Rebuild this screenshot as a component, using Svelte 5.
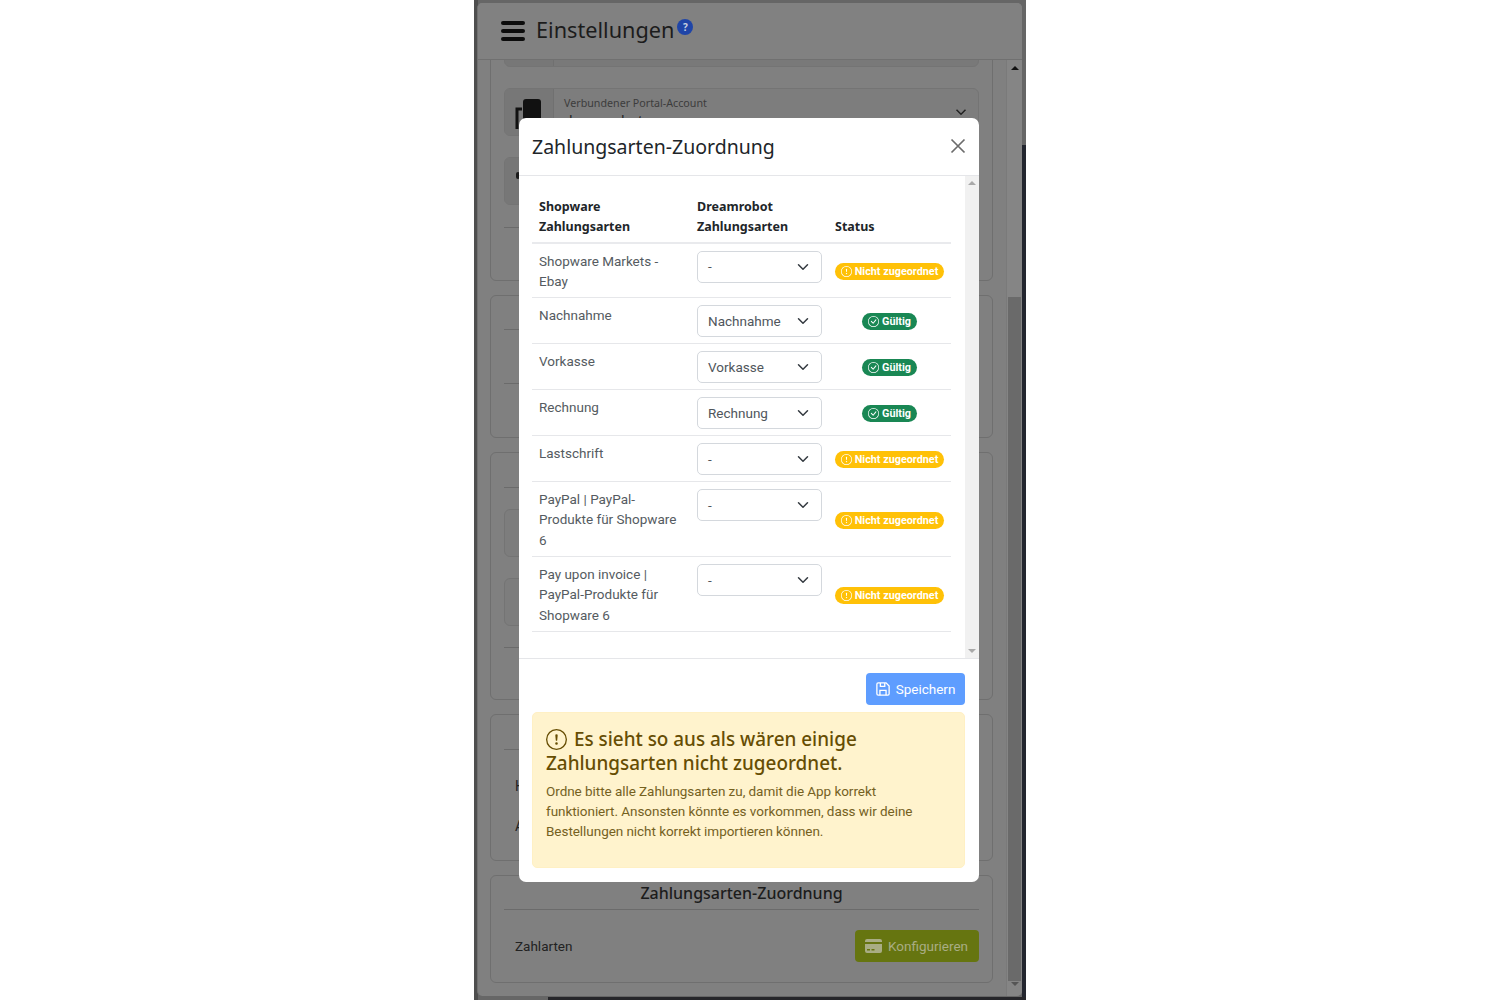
<script>
  const rows = [
    { name: 'Shopware Markets - Ebay', value: '-', ok: false },
    { name: 'Nachnahme', value: 'Nachnahme', ok: true },
    { name: 'Vorkasse', value: 'Vorkasse', ok: true },
    { name: 'Rechnung', value: 'Rechnung', ok: true },
    { name: 'Lastschrift', value: '-', ok: false },
    { name: 'PayPal | PayPal-Produkte für Shopware 6', value: '-', ok: false },
    { name: 'Pay upon invoice | PayPal-Produkte für Shopware 6', value: '-', ok: false },
  ];
</script>

<div class="page">
  <div class="window">
    <header class="topbar">
      <div class="burger"><span></span><span></span><span></span></div>
      <h1>Einstellungen</h1>
      <span class="help">?</span>
    </header>

    <div class="scroller">
      <main class="content">
        <section class="card first">
          <div class="group short"><div class="addon"></div></div>
          <div class="group">
            <div class="addon">
              <svg width="30" height="38" viewBox="0 0 30 38">
                <rect x="10" y="6" width="18" height="22" rx="3" fill="#111" />
                <path d="M9 16H4v20" fill="none" stroke="#111" stroke-width="3" />
              </svg>
            </div>
            <div class="floating">
              <small>Verbundener Portal-Account</small>
              <span>dreamrobot</span>
            </div>
            <svg class="caret" width="12" height="12" viewBox="0 0 16 16"><path d="M2 5l6 6 6-6" fill="none" stroke="#222" stroke-width="2" /></svg>
          </div>
          <div class="group"><div class="addon"><i class="dot"></i></div></div>
          <hr class="last-line" />
        </section>

        <section class="card second">
          <hr />
          <hr class="wide" />
        </section>

        <section class="card third">
          <hr />
          <div class="group"></div>
          <div class="group"></div>
          <hr class="last-line" />
        </section>

        <section class="card fourth">
          <hr />
          <p>H</p>
          <p>A</p>
        </section>

        <section class="card fifth">
          <h2>Zahlungsarten-Zuordnung</h2>
          <hr />
          <div class="pay-row">
            <span>Zahlarten</span>
            <button class="config">
              <svg width="17" height="14" viewBox="0 0 17 14">
                <path d="M0 2a2 2 0 0 1 2-2h13a2 2 0 0 1 2 2v1H0zM0 5h17v7a2 2 0 0 1-2 2H2a2 2 0 0 1-2-2zm2 5v1.500h3V10zm4.500 0v1.500h3V10z" fill="#a9ad84" fill-rule="evenodd" />
              </svg>
              Konfigurieren
            </button>
          </div>
        </section>
      </main>
      <div class="scrollbar">
        <i class="arrow up"></i>
        <div class="thumb"></div>
        <i class="arrow down"></i>
      </div>
    </div>

    <div class="modal" role="dialog" aria-modal="true">
      <div class="modal-head">
        <h3>Zahlungsarten-Zuordnung</h3>
        <svg class="close" width="16" height="16" viewBox="0 0 16 16">
          <path d="M1.500 1.500l13 13M14.500 1.500l-13 13" stroke="#6c6c6c" stroke-width="1.700" fill="none" />
        </svg>
      </div>

      <div class="modal-body">
        <div class="table-wrap">
          <table>
            <thead>
              <tr>
                <th class="c1">Shopware Zahlungsarten</th>
                <th class="c2">Dreamrobot Zahlungsarten</th>
                <th class="c3">Status</th>
              </tr>
            </thead>
            <tbody>
              {#each rows as row}
                <tr>
                  <td class="c1">{row.name}</td>
                  <td class="c2">
                    <div class="select">
                      <span>{row.value}</span>
                      <svg width="12" height="12" viewBox="0 0 16 16"><path d="M2 5l6 6 6-6" fill="none" stroke="#343a40" stroke-width="2" stroke-linecap="round" stroke-linejoin="round" /></svg>
                    </div>
                  </td>
                  <td class="c3">
                    {#if row.ok}
                      <span class="badge green">
                        <svg width="11" height="11" viewBox="0 0 16 16" fill="#fff">
                          <path d="M8 15A7 7 0 1 1 8 1a7 7 0 0 1 0 14zm0 1A8 8 0 1 0 8 0a8 8 0 0 0 0 16z" />
                          <path d="M10.970 4.970a.235.235 0 0 0-.02.022L7.477 9.417 5.384 7.323a.75.75 0 0 0-1.060 1.060L6.970 11.030a.75.75 0 0 0 1.079-.02l3.992-4.990a.75.75 0 0 0-1.071-1.050z" />
                        </svg>
                        Gültig
                      </span>
                    {:else}
                      <span class="badge yellow">
                        <svg width="11" height="11" viewBox="0 0 16 16" fill="#fff">
                          <path d="M8 15A7 7 0 1 1 8 1a7 7 0 0 1 0 14zm0 1A8 8 0 1 0 8 0a8 8 0 0 0 0 16z" />
                          <path d="M7.002 11a1 1 0 1 1 2 0 1 1 0 0 1-2 0zM7.100 4.995a.905.905 0 1 1 1.800 0l-.35 3.507a.552.552 0 0 1-1.100 0L7.100 4.995z" />
                        </svg>
                        Nicht zugeordnet
                      </span>
                    {/if}
                  </td>
                </tr>
              {/each}
            </tbody>
          </table>
        </div>
        <div class="modal-scroll">
          <i class="arrow up light"></i>
          <i class="arrow down light"></i>
        </div>
      </div>

      <div class="modal-foot">
        <button class="save">
          <svg width="14" height="14" viewBox="0 0 16 16" fill="none" stroke="#fff" stroke-width="1.500">
            <path d="M2.500 1h9L15 4.500V13.500a1.500 1.500 0 0 1-1.500 1.500h-11A1.500 1.500 0 0 1 1 13.500v-11A1.500 1.500 0 0 1 2.500 1z" />
            <path d="M5 1v4h5V1M4.500 15V9.500h7V15" />
          </svg>
          Speichern
        </button>
        <div class="alert">
          <h4>
            <svg width="21" height="21" viewBox="0 0 16 16" fill="#664d03">
              <path d="M8 15A7 7 0 1 1 8 1a7 7 0 0 1 0 14zm0 1A8 8 0 1 0 8 0a8 8 0 0 0 0 16z" />
              <path d="M7.002 11a1 1 0 1 1 2 0 1 1 0 0 1-2 0zM7.100 4.995a.905.905 0 1 1 1.800 0l-.35 3.507a.552.552 0 0 1-1.100 0L7.100 4.995z" />
            </svg>
            Es sieht so aus als wären einige Zahlungsarten nicht zugeordnet.
          </h4>
          <p>Ordne bitte alle Zahlungsarten zu, damit die App korrekt funktioniert. Ansonsten könnte es vorkommen, dass wir deine Bestellungen nicht korrekt importieren können.</p>
        </div>
      </div>
    </div>
  </div>
</div>

<style>
  :global(body) {
    margin: 0;
    background: #fff;
  }

  .page {
    width: 552px;
    height: 1000px;
    margin: 0 auto;
    background: linear-gradient(90deg, #4e4e4e 4px, #666 4px);
    position: relative;
    overflow: hidden;
    font-family: "Noto Sans", "Open Sans", sans-serif;
  }

  /* desktop behind the window shows through on the right and bottom */
  .page::before {
    content: "";
    position: absolute;
    top: 145px;
    right: 0;
    bottom: 0;
    width: 4px;
    background: #23262f;
  }

  .page::after {
    content: "";
    position: absolute;
    left: 74px;
    right: 0;
    bottom: 0;
    height: 3px;
    background: #26262a;
  }

  .window {
    position: relative;
    z-index: 1;
    height: 993px;
    margin: 3px 4px 0 3px;
    background: #808080;
    border-radius: 5px;
    border-left: 1px solid #707070;
    overflow: hidden;
  }

  .topbar {
    height: 57px;
    display: flex;
    align-items: center;
    padding: 0 0 1px 23px;
    background: #818181;
    border-bottom: 1px solid #707070;
    box-sizing: border-box;
  }

  .burger {
    width: 24px;
    display: flex;
    flex-direction: column;
    gap: 4px;
    margin-right: 11px;
  }

  .burger span {
    height: 4px;
    border-radius: 2px;
    background: #0c0c0c;
  }

  .topbar h1 {
    margin: -2px 0 0;
    font-size: 21.700px;
    font-weight: 400;
    color: #1c1c1c;
  }

  .help {
    width: 16px;
    height: 16px;
    margin: -8px 0 0 3px;
    border-radius: 50%;
    background: #1f45a8;
    color: #c8d0e0;
    font-size: 10px;
    font-weight: 700;
    line-height: 16px;
    text-align: center;
  }

  .scroller {
    height: 936px;
    display: flex;
    overflow: hidden;
  }

  .content {
    width: 528px;
    padding: 0 13px 0 12px;
    box-sizing: border-box;
    color: #222;
  }

  .card {
    border: 1px solid #6f6f6f;
    border-radius: 6px;
    padding: 0 13px;
    margin-bottom: 14px;
    box-sizing: border-box;
  }

  .card hr {
    border: 0;
    border-top: 1px solid #6b6b6b;
    margin: 0;
  }

  .first {
    height: 281px;
    margin-top: -60px;
    padding-top: 18px;
  }

  .first .group + .group {
    margin-top: 0;
  }

  .first .last-line {
    margin-top: 22px;
  }

  .first .group:last-of-type {
    margin-top: 1px;
    margin-bottom: 0;
  }

  .second {
    height: 143px;
    padding-top: 33px;
  }

  .second .wide {
    margin-top: 53px;
  }

  .third {
    height: 248px;
    padding-top: 34px;
  }

  .fourth {
    height: 147px;
    padding-top: 34px;
  }

  .fourth p {
    margin: 0;
    font-family: Roboto, sans-serif;
    font-size: 14px;
    line-height: 20px;
    padding-left: 11px;
  }

  .fourth p:first-of-type {
    margin-top: 26px;
    margin-bottom: 20px;
  }

  .fifth {
    height: 108px;
  }

  .fifth h2 {
    margin: 0;
    height: 33px;
    font-size: 16px;
    line-height: 34px;
    font-weight: 500;
    text-align: center;
    color: #1c1c1c;
  }

  .group {
    position: relative;
    display: flex;
    height: 48px;
    margin-bottom: 21px;
    border: 1px solid #747474;
    border-radius: 6px;
    box-sizing: border-box;
    background: #7d7d7d;
  }

  .group.short {
    background: #797979;
  }

  .third .group {
    margin-top: 21px;
    margin-bottom: 0;
  }

  .third .last-line {
    margin-top: 21px;
  }

  .addon {
    width: 49px;
    background: #777;
    border-right: 1px solid #707070;
    border-radius: 5px 0 0 5px;
    padding: 4px 0 0 8px;
    box-sizing: border-box;
  }

  .dot {
    display: block;
    width: 4px;
    height: 7px;
    margin: 10px 0 0 3px;
    background: #1a1a1a;
    border-radius: 2px;
  }

  .floating {
    display: flex;
    flex-direction: column;
    padding: 6px 0 0 10px;
    font-size: 14px;
    line-height: 20px;
  }

  .floating small {
    font-size: 10.700px;
    line-height: 16px;
    color: #3c3c3c;
  }

  .caret {
    position: absolute;
    right: 11px;
    top: 17px;
  }

  .pay-row {
    display: flex;
    align-items: center;
    justify-content: space-between;
    padding: 20px 0 0 11px;
    font-family: Roboto, sans-serif;
    font-size: 13.500px;
  }

  .config {
    display: flex;
    align-items: center;
    gap: 6px;
    width: 124px;
    height: 32px;
    padding: 0 0 0 10px;
    border: 0;
    border-radius: 4px;
    background: #667510;
    color: #a9ad84;
    font: inherit;
    font-size: 13.500px;
  }

  .scrollbar {
    position: relative;
    width: 16px;
    background: #858585;
    border-left: 1px solid #7a7a7a;
    box-sizing: border-box;
  }

  .thumb {
    position: absolute;
    top: 237px;
    left: 1px;
    width: 13px;
    height: 684px;
    background: #6a6a6a;
  }

  .arrow {
    position: absolute;
    left: 50%;
    margin-left: -4px;
    width: 0;
    height: 0;
    border-left: 4px solid transparent;
    border-right: 4px solid transparent;
  }

  .arrow.up {
    top: 6px;
    border-bottom: 4px solid #111;
  }

  .arrow.down {
    bottom: 10px;
    border-top: 4px solid #555;
  }

  .arrow.light.up {
    top: 5px;
    border-bottom-color: #a9a9a9;
  }

  .arrow.light.down {
    bottom: 5px;
    border-top-color: #a9a9a9;
  }

  .modal {
    position: absolute;
    left: 41px;
    top: 115px;
    width: 460px;
    height: 764px;
    display: flex;
    flex-direction: column;
    background: #fff;
    border-radius: 7px;
    overflow: hidden;
    color: #212529;
  }

  .modal-head {
    height: 58px;
    display: flex;
    align-items: center;
    justify-content: space-between;
    padding: 0 13px;
    border-bottom: 1px solid #e5e6e9;
    box-sizing: border-box;
    flex: none;
  }

  .modal-head h3 {
    margin: 0;
    font-size: 19.500px;
    font-weight: 400;
  }

  .close {
    margin-top: -1px;
  }

  .modal-body {
    height: 483px;
    flex: none;
    display: flex;
    border-bottom: 1px solid #e5e6e9;
    box-sizing: border-box;
  }

  .table-wrap {
    width: 446px;
    padding: 18px 14px 0 13px;
    box-sizing: border-box;
  }

  .modal-scroll {
    position: relative;
    width: 14px;
    background: #f1f1f1;
  }

  table {
    width: 419px;
    table-layout: fixed;
    border-collapse: collapse;
    font-family: Roboto, sans-serif;
    font-size: 13.500px;
    line-height: 20.300px;
  }

  th {
    text-align: left;
    vertical-align: bottom;
    font-family: "Noto Sans", sans-serif;
    font-weight: 700;
    font-size: 12.500px;
    padding: 3px 7px 4px;
    border-bottom: 2px solid #e9eaed;
  }

  td {
    padding: 7px 7px 6px;
    vertical-align: top;
    color: #555b61;
    border-bottom: 1px solid #e6e7ea;
  }

  .c1 {
    width: 158px;
    box-sizing: border-box;
  }

  .c2 {
    width: 138px;
    box-sizing: border-box;
  }

  .c3 {
    box-sizing: border-box;
  }

  td.c3 {
    vertical-align: middle;
    text-align: center;
    padding: 6px 0;
  }

  .select {
    height: 32px;
    width: 125px;
    display: flex;
    align-items: center;
    justify-content: space-between;
    padding: 0 12px 0 10px;
    border: 1px solid #d4d8dd;
    border-radius: 5px;
    box-sizing: border-box;
    color: #50565c;
  }

  .badge {
    display: inline-flex;
    align-items: center;
    gap: 3px;
    height: 17px;
    padding: 0 6px;
    border-radius: 9px;
    color: #fff;
    font-size: 10.800px;
    font-weight: 700;
    line-height: 17px;
    vertical-align: middle;
  }

  .yellow {
    background: #ffc107;
  }

  .green {
    background: #198754;
  }

  .modal-foot {
    padding: 14px 14px 0 13px;
    display: flex;
    flex-direction: column;
  }

  .save {
    align-self: flex-end;
    width: 99px;
    height: 32px;
    display: flex;
    align-items: center;
    justify-content: center;
    gap: 6px;
    border: 0;
    border-radius: 4px;
    background: #5e9dff;
    color: #fff;
    font-family: Roboto, sans-serif;
    font-size: 13.500px;
    padding: 0;
  }

  .alert {
    height: 156px;
    margin-top: 7px;
    padding: 14px 13px;
    background: #fff3cd;
    border: 1px solid #fff0c4;
    border-radius: 5px;
    box-sizing: border-box;
    color: #664d03;
  }

  .alert h4 {
    margin: 0 0 6px;
    font-size: 18.900px;
    line-height: 24px;
    font-weight: 500;
  }

  .alert h4 svg {
    vertical-align: -4px;
    margin-right: 2px;
  }

  .alert p {
    margin: 0;
    color: #75611f;
    font-family: Roboto, sans-serif;
    font-size: 13.500px;
    line-height: 20px;
    letter-spacing: -0.05px;
  }
</style>
